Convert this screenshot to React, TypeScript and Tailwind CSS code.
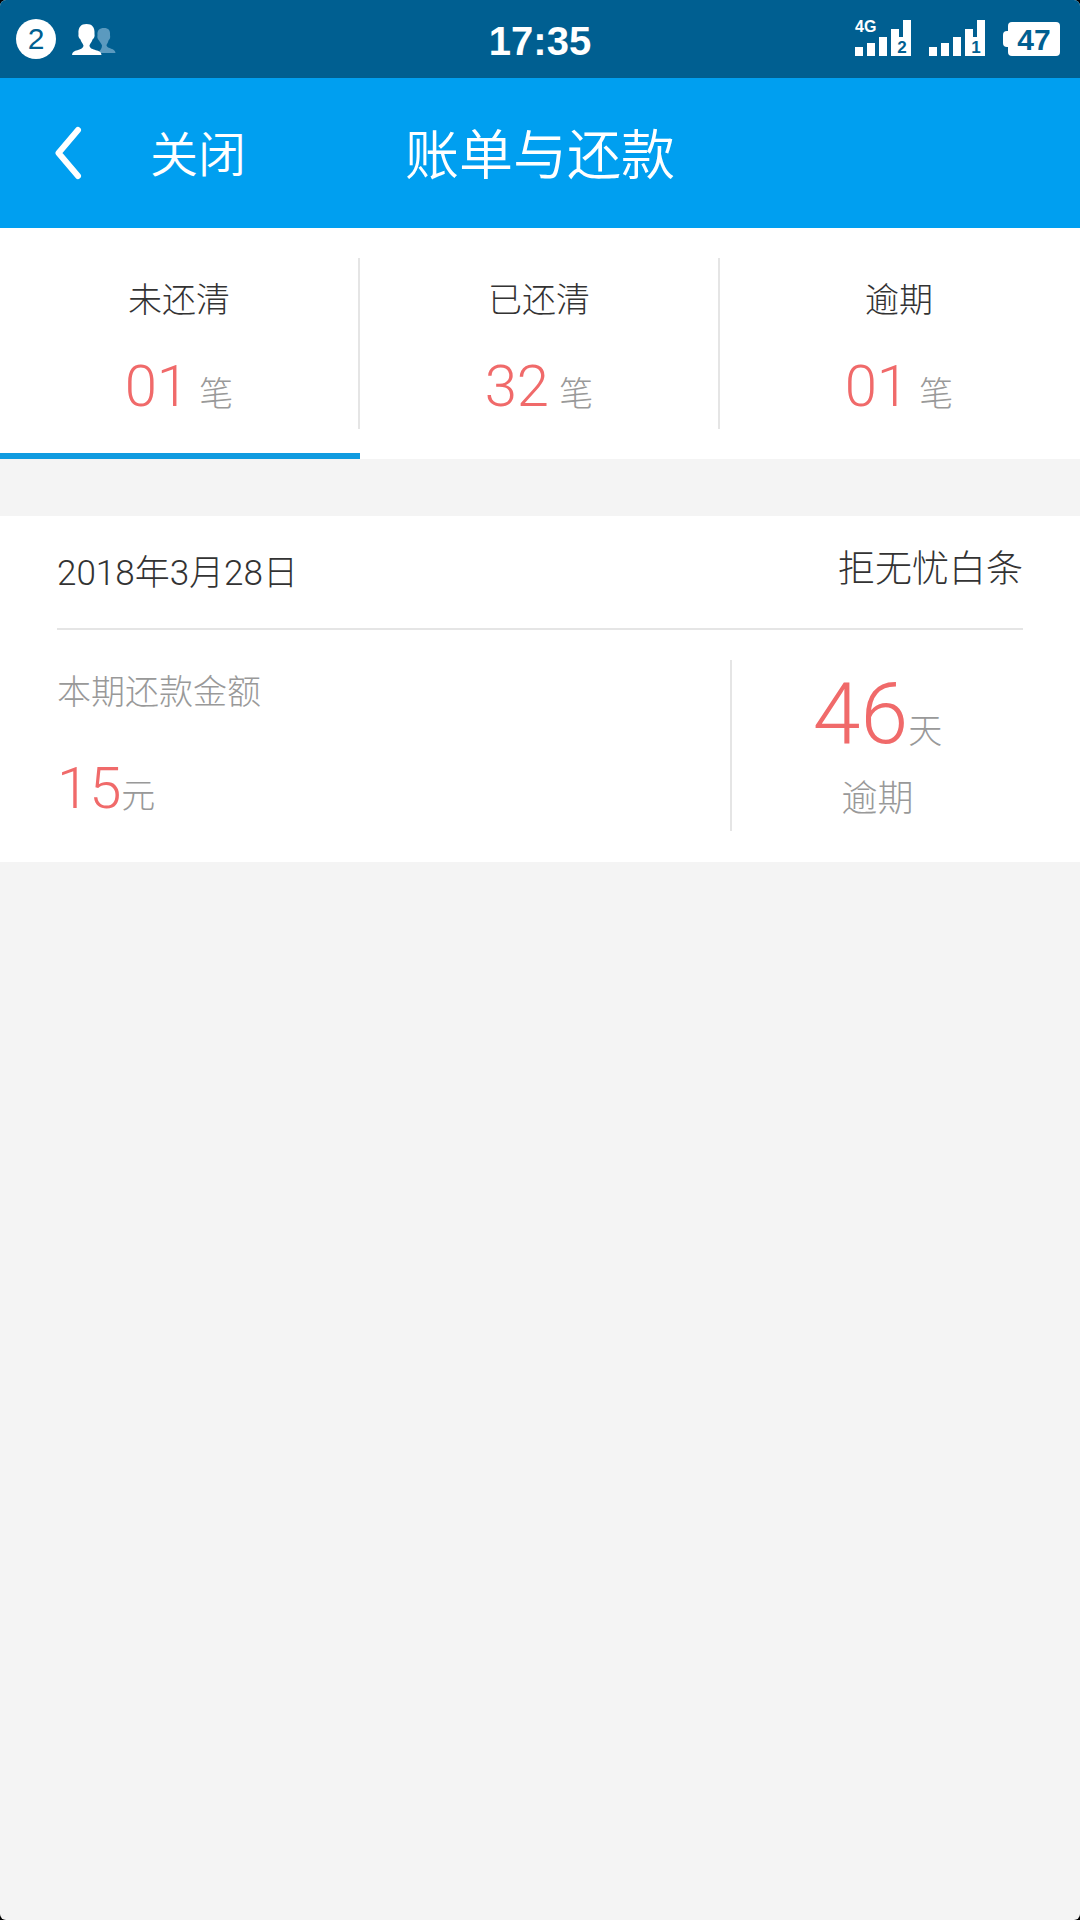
import { useState } from 'react'

const TABS = [
  { id: 'unpaid', label: '未还清', count: '01' },
  { id: 'paid', label: '已还清', count: '32' },
  { id: 'overdue', label: '逾期', count: '01' },
]

const BILLS = [
  {
    id: 1,
    date: '2018年3月28日',
    name: '拒无忧白条',
    amount: '15',
    days: '46',
  },
]

function ContactsIcon() {
  return (
    <svg width="44" height="32" viewBox="0 0 44 32" aria-hidden="true">
      <path
        d="M26 30C28.500 27 30 25.500 30 22.500C29.500 20.500 28 19.500 27 17.500C25.500 15.500 25 14.500 25.500 12C25 7.500 27.500 5 32 5C36.500 5 38.500 7.500 38 12C38.500 14.500 38 16 36.500 17.500C36 20 34.500 21 34.500 22.500C35 26 43.500 25 43.500 30Z"
        fill="#5b9abf"
      />
      <path
        d="M0 32C0 26 10.500 28 11.500 23C11.500 21 9.500 20 8.500 16.500C7 15.500 6 13.500 6.500 11C6 4 9 1 14.500 1C20 1 23 4 22.500 11C23 13.500 22 15.500 20.500 16.500C19.500 20 17.500 21 17.500 23C18.500 28 29.500 26 29.500 32Z"
        fill="#fff"
      />
    </svg>
  )
}

function SignalIcon({ slot, network }: { slot: string; network?: string }) {
  return (
    <svg
      width="56"
      height="46"
      viewBox="0 -4 56 46"
      className="overflow-visible"
      aria-hidden="true"
    >
      <path
        d="M0 27h8v9H0zM12 23h8v13h-8zM24 17h8v19h-8zM36 9h8v8h4V0h8v36H36z"
        fill="#fff"
      />
      {network && (
        <text
          x="0"
          y="12"
          fill="#fff"
          fontSize="16"
          className="font-['Liberation_Sans'] font-bold"
        >
          {network}
        </text>
      )}
      <text
        x="47"
        y="33"
        textAnchor="middle"
        fill="#005f91"
        fontSize="17"
        className="font-['Liberation_Sans'] font-bold"
      >
        {slot}
      </text>
    </svg>
  )
}

function StatusBar() {
  return (
    <div className="grid h-[78px] grid-cols-3 items-center rounded-t-md bg-[#005f91] px-4 font-['Liberation_Sans',sans-serif] text-white">
      <div className="flex items-center gap-4">
        <span className="flex h-10 w-10 items-center justify-center rounded-full bg-white text-[30px] leading-none font-normal text-[#005f91]">
          2
        </span>
        <ContactsIcon />
      </div>
      <time className="pt-1 text-center text-[40px] font-bold">17:35</time>
      <div className="flex items-center justify-end gap-[18px] pr-1">
        <SignalIcon slot="2" network="4G" />
        <SignalIcon slot="1" />
        <span className="flex items-center">
          <span className="h-4 w-[5px] rounded-l-sm bg-white" />
          <span className="flex h-[34px] w-[52px] items-center justify-center rounded-sm bg-white pt-0.5 text-[30px] leading-none font-bold text-[#005f91]">
            47
          </span>
        </span>
      </div>
    </div>
  )
}

export default function App() {
  const [activeTab, setActiveTab] = useState('unpaid')

  return (
    <div className="min-h-screen bg-black">
      <div className="min-h-screen rounded-md bg-[#f4f4f4] font-['Roboto','Noto_Sans_CJK_SC',sans-serif] font-light">
        <StatusBar />

        <header className="grid h-[150px] grid-cols-[1fr_auto_1fr] items-center bg-[#009ff0] text-white">
          <div className="flex items-center gap-[66px] pl-[54px]">
            <button type="button" aria-label="返回">
              <svg width="30" height="54" viewBox="0 0 30 54" fill="none">
                <path
                  d="M24 4L4.500 27L24 50"
                  stroke="#fff"
                  strokeWidth="6"
                  strokeLinecap="round"
                  strokeLinejoin="round"
                />
              </svg>
            </button>
            <button type="button" className="pt-1.5 text-[48px] font-[350]">
              关闭
            </button>
          </div>
          <h1 className="pt-1.5 text-[54px] font-[350]">账单与还款</h1>
        </header>

        <nav className="flex bg-white">
          {TABS.map((tab) => (
            <button
              key={tab.id}
              type="button"
              className={`group flex-1 border-b-[6px] pt-[30px] pb-6 ${
                activeTab === tab.id ? 'border-[#109be0]' : 'border-transparent'
              }`}
              onClick={() => setActiveTab(tab.id)}
            >
              <span className="flex h-[171px] flex-col items-center border-r-2 border-[#e5e5e5] pt-[18px] group-last:border-transparent">
                <span className="text-[34px] leading-[48px] text-[#333]">
                  {tab.label}
                </span>
                <span className="mt-[26px] text-[34px] leading-[72px] text-[#999]">
                  <span className="mr-0.5 text-[58px] text-[#f06a6a]">
                    {tab.count}
                  </span>{' '}
                  笔
                </span>
              </span>
            </button>
          ))}
        </nav>

        <main className="mt-[57px]">
          {BILLS.map((bill) => (
            <section key={bill.id} className="bg-white px-[57px]">
              <div className="flex h-[114px] items-center justify-between border-b-2 border-[#e5e5e5] text-[#333]">
                <time className="pt-1 text-[35px]">{bill.date}</time>
                <h2 className="pb-1 text-[37px]">{bill.name}</h2>
              </div>
              <div className="flex py-[30px] text-[#999]">
                <div className="flex-1">
                  <p className="pt-2 text-[34px] leading-[48px]">
                    本期还款金额
                  </p>
                  <p className="mt-9 text-[34px] leading-[72px]">
                    <span className="text-[58px] text-[#f06a6a]">
                      {bill.amount}
                    </span>
                    元
                  </p>
                </div>
                <div className="flex h-[171px] w-[293px] flex-col items-center border-l-2 border-[#e5e5e5]">
                  <p className="text-[34px] leading-[108px]">
                    <span className="text-[86px] text-[#f06a6a]">
                      {bill.days}
                    </span>
                    天
                  </p>
                  <p className="text-[36px] leading-[28px]">逾期</p>
                </div>
              </div>
            </section>
          ))}
        </main>
      </div>
    </div>
  )
}
